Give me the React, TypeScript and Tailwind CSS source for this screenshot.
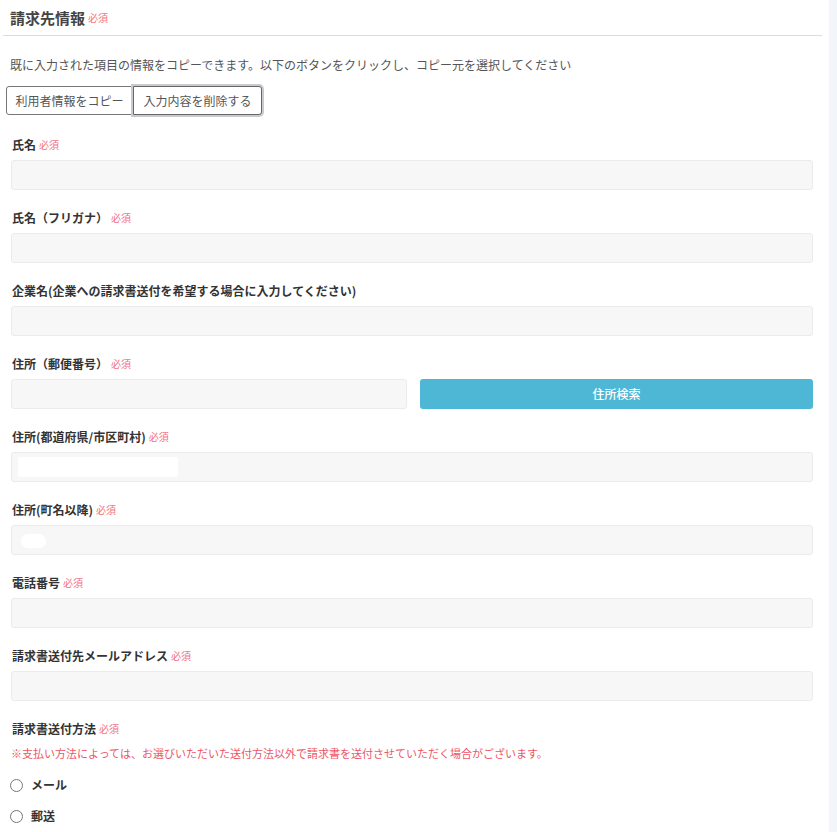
import React, { useState } from 'react';

const font = { fontFamily: '"Noto Sans CJK JP", "Noto Sans", sans-serif' };

// 必須バッジ
const Required = () => (
  <span className="ml-[3px] text-[10px] font-normal text-[#f2727f]">必須</span>
);

type FieldProps = {
  label: string;
  required?: boolean;
  children: React.ReactNode;
};

const Field = ({ label, required = true, children }: FieldProps) => (
  <div className="pb-[19px]">
    <div className="h-[18px] flex items-center pl-[12px] text-[12px] font-bold leading-[18px] text-[#333]">
      {label}
      {required && <Required />}
    </div>
    <div className="mt-[6px] pl-[11px] pr-[16px]">{children}</div>
  </div>
);

const TextInput = ({ blob }: { blob?: 'pref' | 'town' }) => (
  <div className="relative h-[30px] w-full rounded-[3px] border border-[#ebebeb] bg-[#f7f7f7]">
    {blob === 'pref' && (
      <span className="absolute left-[6px] top-[4px] h-[20px] w-[160px] rounded-[2px] bg-white blur-[0.5px]" />
    )}
    {blob === 'town' && (
      <span className="absolute left-[9px] top-[8px] h-[14px] w-[25px] rounded-full bg-white blur-[0.5px]" />
    )}
  </div>
);

export default function App() {
  const [method, setMethod] = useState<string>('');

  return (
    <div className="flex min-h-[832px] w-[837px] bg-white" style={font}>
      <div className="w-[829px] bg-white">
        {/* 見出し */}
        <div className="ml-[3px] w-[819px] border-b border-[#dcdcdc] pl-[7px] pt-[7px] pb-[6px]">
          <h2 className="flex items-center text-[15px] font-bold leading-[22px] text-[#444]">
            請求先情報
            <Required />
          </h2>
        </div>

        <p className="mt-[20px] pl-[10px] text-[12px] leading-[18px] text-[#555]">
          既に入力された項目の情報をコピーできます。以下のボタンをクリックし、コピー元を選択してください
        </p>

        <div className="mt-[12px] ml-[6px] flex">
          <button
            type="button"
            className="h-[29px] w-[127px] rounded-l-[3px] border border-[#777] bg-white text-[12px] text-[#555]"
          >
            利用者情報をコピー
          </button>
          <button
            type="button"
            className="h-[29px] w-[129px] rounded-r-[3px] border border-[#666] bg-white text-[12px] text-[#555] shadow-[0_0_0_2px_#c7cbd0]"
          >
            入力内容を削除する
          </button>
        </div>

        <div className="mt-[21px]">
          <Field label="氏名">
            <TextInput />
          </Field>
          <Field label="氏名（フリガナ）">
            <TextInput />
          </Field>
          <Field label="企業名(企業への請求書送付を希望する場合に入力してください)" required={false}>
            <TextInput />
          </Field>
          <Field label="住所（郵便番号）">
            <div className="flex gap-[13px]">
              <div className="w-[396px]">
                <TextInput />
              </div>
              <button
                type="button"
                className="h-[30px] flex-1 rounded-[3px] bg-[#4fb7d6] text-[12px] font-medium text-white"
              >
                住所検索
              </button>
            </div>
          </Field>
          <Field label="住所(都道府県/市区町村)">
            <TextInput blob="pref" />
          </Field>
          <Field label="住所(町名以降)">
            <TextInput blob="town" />
          </Field>
          <Field label="電話番号">
            <TextInput />
          </Field>
          <Field label="請求書送付先メールアドレス">
            <TextInput />
          </Field>

          {/* 送付方法 */}
          <div>
            <div className="h-[18px] flex items-center pl-[12px] text-[12px] font-bold leading-[18px] text-[#333]">
              請求書送付方法
              <Required />
            </div>
            <p className="mt-[6px] pl-[11px] text-[11px] leading-[18px] text-[#ee5566]">
              ※支払い方法によっては、お選びいただいた送付方法以外で請求書を送付させていただく場合がございます。
            </p>
            <div className="mt-[14px] flex flex-col gap-[13px] pl-[10px]">
              {['メール', '郵送'].map((m) => (
                <label key={m} className="flex h-[18px] items-center gap-[8px] cursor-pointer">
                  <span
                    onClick={() => setMethod(m)}
                    className="flex h-[13px] w-[13px] items-center justify-center rounded-full border border-[#767676] bg-white"
                  >
                    {method === m && <span className="h-[7px] w-[7px] rounded-full bg-[#333]" />}
                  </span>
                  <span className="text-[12px] font-bold text-[#333]">{m}</span>
                </label>
              ))}
            </div>
          </div>
        </div>
      </div>
      <div className="flex-1 bg-[#f2f5f9]" />
    </div>
  );
}
